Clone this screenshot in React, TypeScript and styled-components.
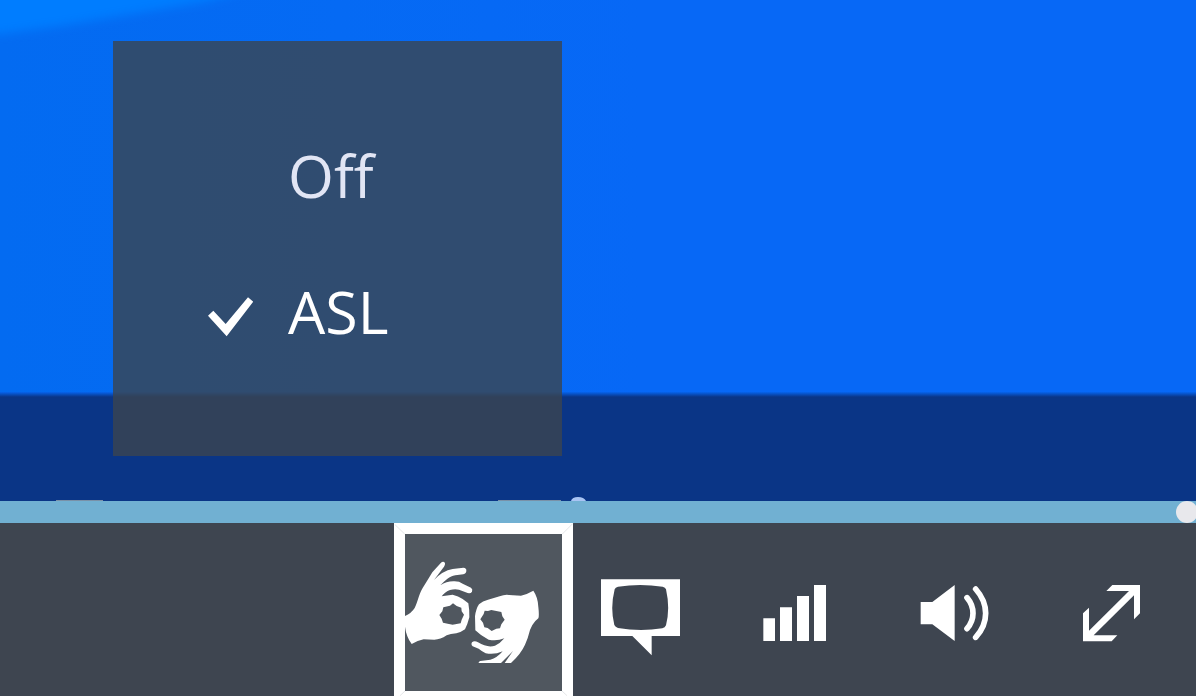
import React, { useState } from "react";
import styled, { createGlobalStyle } from "styled-components";

const GlobalStyle = createGlobalStyle`
  * { box-sizing: border-box; }
  body { margin: 0; background: #3e4450; }
`;

const Player = styled.main`
  display: flex;
  flex-direction: column;
  min-height: 100vh;
  overflow: hidden;
  font-family: "Open Sans", "Noto Sans", sans-serif;
`;

const Stage = styled.section`
  position: relative;
  display: flex;
  flex: 1;
  flex-direction: column;
  justify-content: flex-end;
  min-height: 460px;
  background: linear-gradient(90deg, #036bf1 0, #056af4 340px, #0768f6 640px);
`;

const Glow = styled.svg`
  position: absolute;
  top: 0;
  left: 0;
`;

const LowerThird = styled.div`
  position: relative;
  height: 109px;
  background: linear-gradient(#0664ee 0, #0a3586 5px);
`;

const Caption = styled.svg`
  position: absolute;
  bottom: 0;
  left: 0;
`;

const Menu = styled.fieldset`
  position: absolute;
  bottom: 45px;
  left: 113px;
  width: 449px;
  height: 415px;
  margin: 0;
  padding: 66px 0 0;
  border: 0;
  background: rgba(59, 69, 79, 0.8);
`;

const Option = styled.label<{ $active: boolean }>`
  display: flex;
  align-items: center;
  height: 136px;
  padding-left: 95px;
  color: ${(p) => (p.$active ? "#ffffff" : "#e1e5f4")};
  font-size: 59px;
  line-height: 80px;
  font-variant-ligatures: none;
  cursor: pointer;
`;

const Radio = styled.input`
  appearance: none;
  width: 0;
  height: 0;
  margin: 0;
`;

const CheckSlot = styled.span`
  display: flex;
  flex: 0 0 80px;
  padding-top: 12px;
`;

const SeekRow = styled.div`
  display: flex;
  height: 22px;
  overflow: hidden;
  background: #71b0d2;
`;

const Seek = styled.input`
  flex: 1 0 auto;
  width: 100%;
  height: 22px;
  margin: 0 -2px 0 0;
  appearance: none;
  background: transparent;
  cursor: pointer;

  &::-webkit-slider-thumb {
    appearance: none;
    width: 22px;
    height: 22px;
    border-radius: 50%;
    background: #e8e8ec;
  }
`;

const Controls = styled.div`
  display: flex;
  justify-content: flex-end;
  height: 173px;
  padding: 11px 6px 5px 0;
  background: #3e4550;
`;

const ControlButton = styled.button<{ $selected?: boolean }>`
  flex: 0 0 157px;
  height: 157px;
  padding: 0;
  border: 0;
  color: #ffffff;
  background: ${(p) => (p.$selected ? "#50575f" : "transparent")};
  box-shadow: ${(p) => (p.$selected ? "0 0 0 11px #ffffff" : "none")};
  cursor: pointer;
`;

const Glyph = styled.svg`
  display: block;
  width: 157px;
  height: 157px;
  overflow: visible;
  fill: currentColor;
`;

const CheckIcon = () => (
  <svg width="45" height="40" viewBox="54 500 135 120" aria-hidden="true">
    <path d="M54 556L70 541L107 581L174 501L190 514L110 618Z" fill="#fff" />
  </svg>
);

const SignLanguageIcon = () => (
  <Glyph viewBox="60 57 471 471" aria-hidden="true">
    <path
      fillRule="evenodd"
      d="M60 303Q79 295 89 279C99 258 101 240 113 219Q127 197 142 172L168 143Q175 137 180 144Q181 149 177 155L147 195Q173 167 203 162L235 158Q245 159 244 167Q244 175 235 178L211 181C193 184 181 196 166 211Q184 199 205 199Q222 198 233 206L258 218Q264 223 261 230Q257 236 248 234L222 224Q209 221 195 225Q180 230 170 244L203 239Q220 243 233 252L250 265Q254 287 253 307Q248 327 240 343Q228 352 214 355Q196 357 185 361Q166 374 148 374L116 373Q98 376 80 387Q64 366 60 335ZM204 265L195 272L175 277L172 289L163 300L170 311L174 323L188 326L203 329L219 326L227 325L230 314L237 299L230 289L229 278L215 273Z"
    />
    <path
      fillRule="evenodd"
      d="M445 227Q459 247 460 276Q463 302 460 310L451 318Q440 330 435 345Q429 370 420 389Q408 416 378 444H359L384 408L348 444H281Q280 441 286 438L316 434Q336 429 353 409Q329 420 302 415Q291 409 281 401L263 394Q257 389 261 382Q268 376 279 382Q289 388 298 391Q315 397 330 392Q345 386 358 370Q336 379 311 374Q288 363 271 346L270 304Q273 281 282 268Q293 258 309 254L344 244Q359 238 372 240L408 242Q430 236 445 227ZM299 287L296 297L286 313L294 323L298 337L308 339L320 348L334 341L345 340L349 328L359 314L352 304L349 291L334 288L319 285L309 288Z"
    />
    <path
      d="M29 28L59 57M563 26L532 57M60 528L45 542M531 528L546 542"
      fill="none"
      stroke="#d7dadd"
      strokeWidth="2"
    />
  </Glyph>
);

const CaptionsIcon = () => (
  <Glyph viewBox="-84 -78 471 471" aria-hidden="true">
    <path
      fillRule="evenodd"
      d="M33 58H270V228H185V286L127 228H33ZM74 88Q76 82 84 80Q150 70 218 80Q226 82 228 88Q241 145 228 196Q225 203 217 205Q150 215 84 204Q76 201 73 195Q60 145 74 88Z"
    />
  </Glyph>
);

const QualityIcon = () => (
  <Glyph viewBox="387 -78 471 471" aria-hidden="true">
    <path d="M520 175H555V243H520ZM570 142H606V243H570ZM621 108H657V243H621ZM672 75H708V243H672Z" />
  </Glyph>
);

const VolumeIcon = () => (
  <Glyph viewBox="-72 -78 471 471" aria-hidden="true">
    <path d="M62 126H97L164 75V243L97 193H62Z" />
    <path
      d="M201 113Q219 134 219 160Q219 186 201 206M227 87Q257 121 257 160Q257 200 227 232"
      fill="none"
      stroke="currentColor"
      strokeWidth="17"
      strokeLinecap="round"
    />
  </Glyph>
);

const FullscreenIcon = () => (
  <Glyph viewBox="399 -78 471 471" aria-hidden="true">
    <path d="M637 75H720V160L702 178V106L581 226H652L635 244H549V160L567 143V212L687 93H619Z" />
  </Glyph>
);

const tracks = ["Off", "ASL"];

export default function App() {
  const [track, setTrack] = useState("ASL");
  return (
    <>
      <GlobalStyle />
      <Player>
        <Stage aria-label="Video">
          <Glow width="360" height="60" aria-hidden="true">
            <defs>
              <filter id="soft" x="-20%" y="-50%" width="140%" height="200%">
                <feGaussianBlur stdDeviation="5" />
              </filter>
            </defs>
            <path
              d="M-20 -20H280L205 2L120 16L60 26L0 34H-20Z"
              fill="#007dff"
              filter="url(#soft)"
            />
          </Glow>
          <LowerThird>
            <Caption width="600" height="6" aria-hidden="true">
              <path d="M56 5H103V6H56ZM498 5H561V6H498Z" fill="#7991a8" />
              <path d="M571 6Q572 2 578 2Q584 2 586 6Z" fill="#a9c4f3" />
            </Caption>
          </LowerThird>
          <Menu aria-label="Sign language">
            {tracks.map((name) => (
              <Option key={name} $active={track === name}>
                <Radio
                  type="radio"
                  name="track"
                  checked={track === name}
                  onChange={() => setTrack(name)}
                />
                <CheckSlot>{track === name && <CheckIcon />}</CheckSlot>
                {name}
              </Option>
            ))}
          </Menu>
        </Stage>
        <SeekRow>
          <Seek type="range" min="0" max="100" defaultValue="100" aria-label="Seek" />
        </SeekRow>
        <Controls>
          <ControlButton $selected aria-label="Sign language">
            <SignLanguageIcon />
          </ControlButton>
          <ControlButton aria-label="Captions">
            <CaptionsIcon />
          </ControlButton>
          <ControlButton aria-label="Quality">
            <QualityIcon />
          </ControlButton>
          <ControlButton aria-label="Volume">
            <VolumeIcon />
          </ControlButton>
          <ControlButton aria-label="Full screen">
            <FullscreenIcon />
          </ControlButton>
        </Controls>
      </Player>
    </>
  );
}
